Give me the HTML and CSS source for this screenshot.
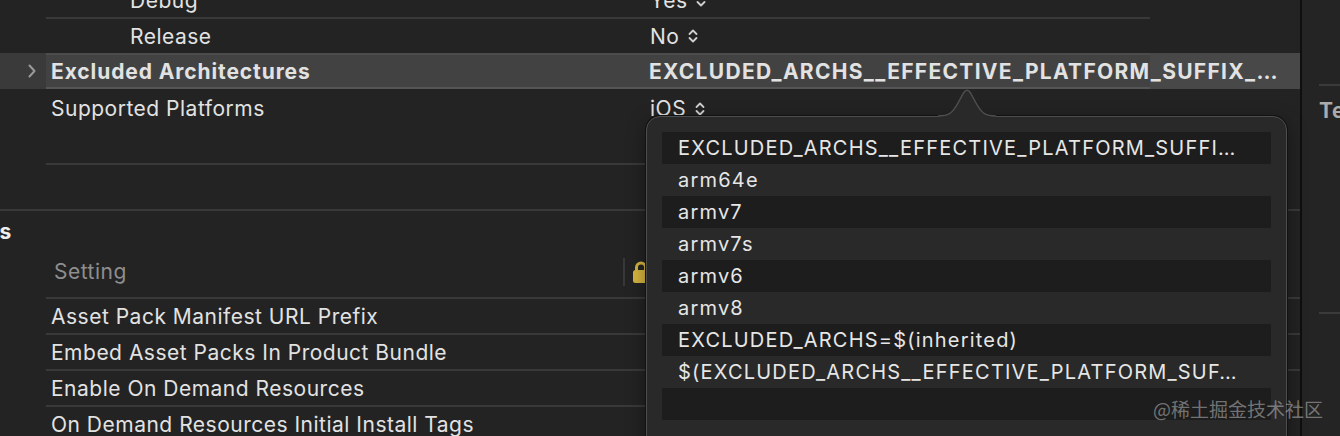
FILE: index.html
```html
<!DOCTYPE html>
<html lang="en">
<head>
    <meta charset="UTF-8">
    <meta name="viewport" content="width=device-width, initial-scale=1.0">
    <title>Build Settings</title>
    <link rel="stylesheet" href="styles.css">
</head>
<body>
    <div class="window">
        <div class="editor">
            <div class="settings top">
                <div class="row">
                    <div class="gutter"></div>
                    <div class="cells">
                        <div class="name sub">Debug</div>
                        <div class="value">Yes
                            <svg class="updown" width="10" height="16" viewBox="0 0 10 16"><path d="M1.5 6 L5 2.5 L8.5 6 M1.5 10 L5 13.5 L8.5 10"/></svg>
                        </div>
                    </div>
                </div>
                <div class="row">
                    <div class="gutter"></div>
                    <div class="cells">
                        <div class="name sub">Release</div>
                        <div class="value">No
                            <svg class="updown" width="10" height="16" viewBox="0 0 10 16"><path d="M1.5 6 L5 2.5 L8.5 6 M1.5 10 L5 13.5 L8.5 10"/></svg>
                        </div>
                    </div>
                </div>
                <div class="row selected">
                    <div class="gutter">
                        <svg class="disclosure" width="10" height="16" viewBox="0 0 10 16"><path d="M2.5 2.5 L7.5 8 L2.5 13.5"/></svg>
                    </div>
                    <div class="cells">
                        <div class="name">Excluded Architectures</div>
                        <div class="value">EXCLUDED_ARCHS__EFFECTIVE_PLATFORM_SUFFIX_…</div>
                    </div>
                </div>
                <div class="row tall">
                    <div class="gutter"></div>
                    <div class="cells">
                        <div class="name">Supported Platforms</div>
                        <div class="value">iOS
                            <svg class="updown" width="10" height="16" viewBox="0 0 10 16"><path d="M1.5 6 L5 2.5 L8.5 6 M1.5 10 L5 13.5 L8.5 10"/></svg>
                        </div>
                    </div>
                </div>
            </div>

            <div class="section">
                <h2 class="section-title">Assets</h2>
                <div class="settings">
                    <div class="row head">
                        <div class="gutter"></div>
                        <div class="cells">
                            <div class="name">Setting</div>
                            <div class="value">
                                <svg class="lock" width="16" height="22" viewBox="0 0 16 22">
                                    <path class="shackle" d="M3.5 10 V6.5 a4.5 4.5 0 0 1 9 0 V10"/>
                                    <rect x="0" y="9" width="16" height="13" rx="2.5"/>
                                </svg>
                            </div>
                        </div>
                    </div>
                    <div class="row">
                        <div class="gutter"></div>
                        <div class="cells"><div class="name">Asset Pack Manifest URL Prefix</div></div>
                    </div>
                    <div class="row">
                        <div class="gutter"></div>
                        <div class="cells"><div class="name">Embed Asset Packs In Product Bundle</div></div>
                    </div>
                    <div class="row">
                        <div class="gutter"></div>
                        <div class="cells"><div class="name">Enable On Demand Resources</div></div>
                    </div>
                    <div class="row">
                        <div class="gutter"></div>
                        <div class="cells"><div class="name">On Demand Resources Initial Install Tags</div></div>
                    </div>
                </div>
            </div>

            <!-- value list popover for Excluded Architectures -->
            <div class="popover">
                <svg class="arrow" width="58" height="30" viewBox="0 0 58 30">
                    <path class="arrow-fill" d="M0 28 C10 28 14 26 20 15 L25.5 5 Q29 -0.5 32.5 5 L38 15 C44 26 48 28 58 28 L58 31 L0 31 Z"/>
                    <path class="arrow-edge" d="M0 28 C10 28 14 26 20 15 L25.5 5 Q29 -0.5 32.5 5 L38 15 C44 26 48 28 58 28"/>
                </svg>
                <ul class="values">
                    <li>EXCLUDED_ARCHS__EFFECTIVE_PLATFORM_SUFFI…</li>
                    <li>arm64e</li>
                    <li>armv7</li>
                    <li>armv7s</li>
                    <li>armv6</li>
                    <li>armv8</li>
                    <li>EXCLUDED_ARCHS=$(inherited)</li>
                    <li>$(EXCLUDED_ARCHS__EFFECTIVE_PLATFORM_SUF…</li>
                    <li></li>
                    <li></li>
                </ul>
            </div>
        </div>

        <aside class="inspector">
            <div class="group">
                <h3>Text Settings</h3>
            </div>
            <div class="group"></div>
        </aside>
    </div>
    <div class="watermark">@稀土掘金技术社区</div>
</body>
</html>
```

FILE: styles.css
```css
body {
    margin: 0;
    background-color: #232323;
    color: #e2e2e2;
    font-family: Inter, "Noto Sans", sans-serif;
    font-size: 21px;
    letter-spacing: 0.5px;
    overflow: hidden;
}
.window {
    display: flex;
    height: 436px;
    overflow: hidden;
}
.editor {
    position: relative;
    width: 1300px;
    flex: none;
    border-right: 2px solid #0f0f0f;
}
.settings.top {
    margin-top: -19px;
    height: 228px;
    box-sizing: border-box;
}
.row {
    display: flex;
    height: 36px;
}
.gutter {
    width: 46px;
    flex: none;
    display: flex;
    align-items: center;
    justify-content: flex-end;
    padding-right: 9px;
    box-sizing: border-box;
}
.cells {
    flex: 1;
    display: flex;
    align-items: center;
    border-top: 2px solid #393939;
    min-width: 0;
}
.top .cells {
    flex: none;
    width: 1104px;
}
.name {
    width: 604px;
    flex: none;
    padding-left: 5px;
    box-sizing: border-box;
    white-space: nowrap;
}
.name.sub {
    padding-left: 84px;
}
.value {
    display: flex;
    align-items: center;
    gap: 9px;
    white-space: nowrap;
}
.updown path, .disclosure path {
    fill: none;
    stroke: #cfcfcf;
    stroke-width: 1.8;
    stroke-linecap: round;
    stroke-linejoin: round;
}
.disclosure path {
    stroke: #9a9a9a;
    stroke-width: 2;
}
.row.selected {
    background: linear-gradient(to right, #3a3a3a 46px, #424242 46px, #424242 1150px, #484848 1150px);
    font-weight: 700;
    letter-spacing: 0.9px;
}
.row.selected .cells {
    border-top-color: #4c4c4c;
    border-bottom: 2px solid #555;
    height: 36px;
    box-sizing: border-box;
}
.row.selected .value {
    margin-left: -1px;
    letter-spacing: 1.3px;
}
.row.tall {
    height: 76px;
}
.row.tall .cells {
    align-items: flex-start;
    padding-top: 7px;
    border-top: none;
    border-bottom: 2px solid #393939;
}
.section {
    border-top: 2px solid #393939;
}
.section-title {
    margin: 0 0 0 -62px;
    height: 40px;
    line-height: 42px;
    font-size: 21px;
    font-weight: 700;
    color: #eeeeee;
}
.row.head {
    height: 46px;
}
.row.head .cells {
    border-top: none;
    padding-bottom: 4px;
}
.row.head .name {
    width: 579px;
    padding-left: 8px;
    color: #8e8e8e;
    border-right: 2px solid #383838;
    line-height: 28px;
}
.row.head .value {
    padding-left: 8px;
}
.lock rect {
    fill: #d6b43f;
}
.lock .shackle {
    fill: none;
    stroke: #d6b43f;
    stroke-width: 3;
}
.popover {
    position: absolute;
    left: 646px;
    top: 116px;
    width: 641px;
    height: 360px;
    box-sizing: border-box;
    padding: 15px 15px 0 15px;
    background-color: #292929;
    border: 1.5px solid #4e4e4e;
    border-radius: 14px;
    box-shadow: 0 0 0 1px #121212, 0 6px 20px rgba(0, 0, 0, 0.4);
    font-size: 20px;
    letter-spacing: 1.2px;
}
.arrow {
    position: absolute;
    left: 291px;
    top: -29.5px;
    overflow: visible;
}
.arrow-fill {
    fill: #292929;
}
.arrow-edge {
    fill: none;
    stroke: #4e4e4e;
    stroke-width: 1.5;
}
.values {
    list-style: none;
    margin: 0;
    padding: 0;
}
.values li {
    height: 32px;
    line-height: 32px;
    padding-left: 16px;
    background-color: #292929;
    color: #e6e6e6;
    white-space: nowrap;
}
.values li:nth-child(odd) {
    background-color: #1d1d1d;
}
.inspector {
    flex: 1;
    background-color: #242424;
    padding-left: 17px;
    overflow: hidden;
}
.group {
    border-top: 2px solid #3a3a3a;
    margin-top: 84px;
    height: 226px;
}
.group h3 {
    margin: 12px 0 0;
    font-size: 21px;
    font-weight: 700;
    color: #ababab;
    white-space: nowrap;
}
.group + .group {
    margin-top: 0;
}
.watermark {
    position: absolute;
    right: 17px;
    bottom: 14px;
    font-family: "Noto Sans CJK SC", sans-serif;
    font-size: 19px;
    letter-spacing: 0;
    color: rgba(190, 190, 190, 0.55);
}
```
